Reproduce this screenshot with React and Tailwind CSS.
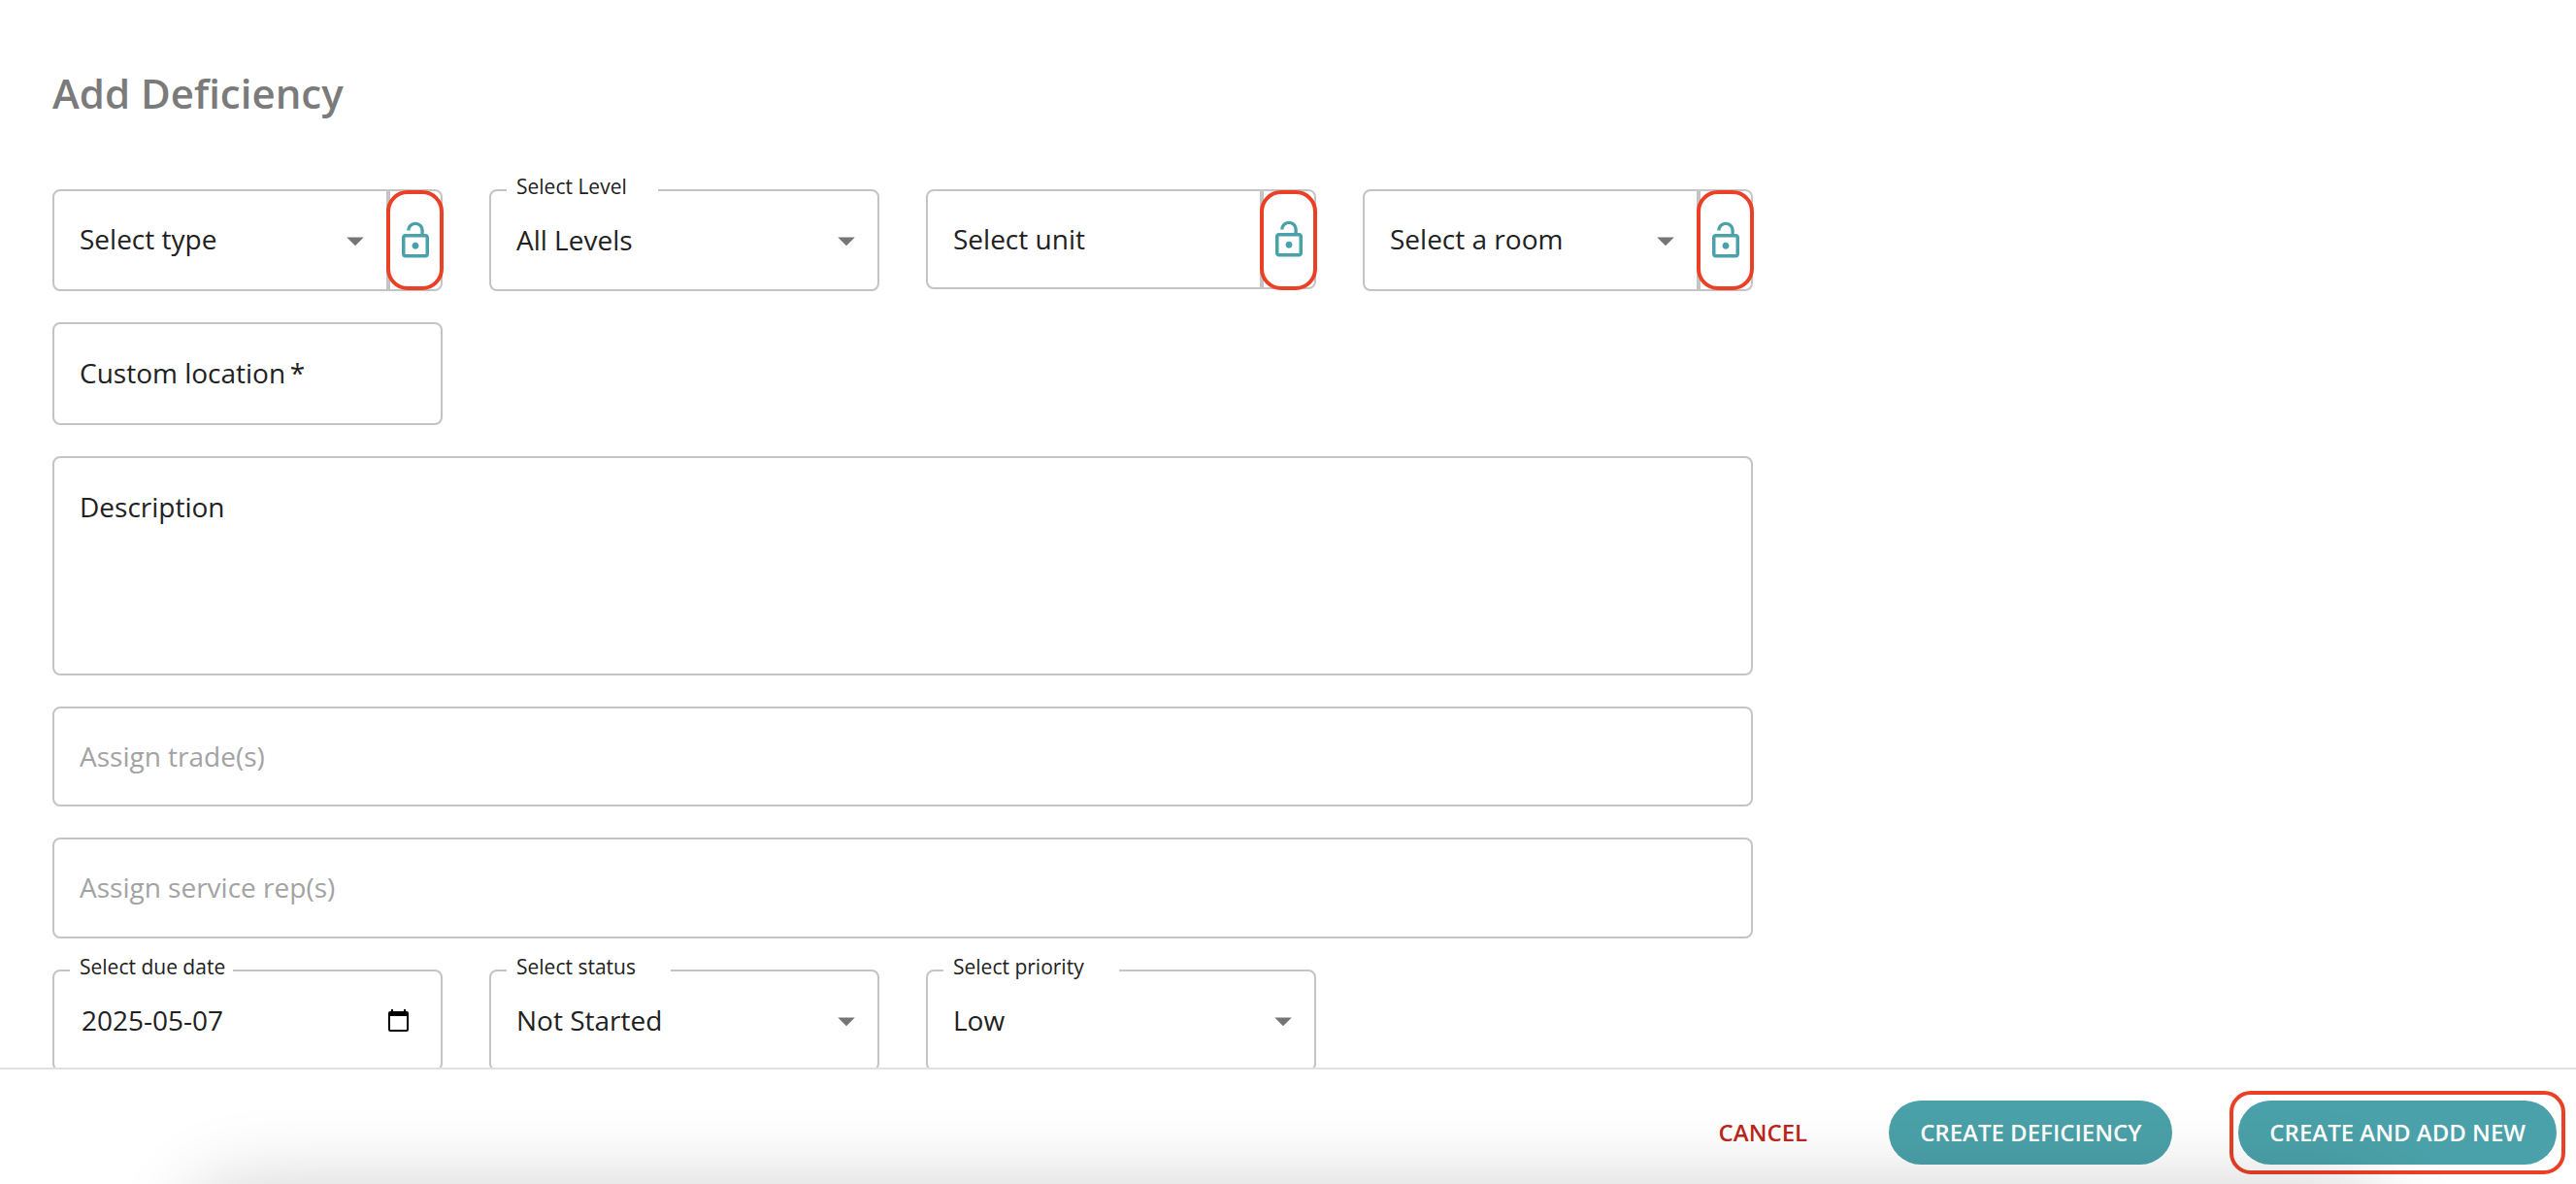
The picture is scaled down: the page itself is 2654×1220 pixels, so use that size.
import React from 'react';

const ArrowDropDown = () => (
  <svg
    viewBox="0 0 24 24"
    className="pointer-events-none absolute right-[11px] top-1/2 h-[42px] w-[42px] -translate-y-1/2 fill-[#757575]"
    aria-hidden="true"
  >
    <path d="M7 10l5 5 5-5z" />
  </svg>
);

const LockOpen = () => (
  <svg viewBox="0 0 24 24" className="h-[42px] w-[42px] shrink-0 fill-[#4ba1a9]" aria-hidden="true">
    <path d="M12 17c1.1 0 2-.9 2-2s-.9-2-2-2-2 .9-2 2 .9 2 2 2zm6-9h-1V6c0-2.76-2.24-5-5-5S7 3.24 7 6h1.9c0-1.71 1.39-3.1 3.1-3.1 1.71 0 3.1 1.39 3.1 3.1v2H6c-1.1 0-2 .9-2 2v10c0 1.1.9 2 2 2h12c1.1 0 2-.9 2-2V10c0-1.1-.9-2-2-2zm0 12H6V10h12v10z" />
  </svg>
);

const CalendarIcon = () => (
  <svg viewBox="0 0 21 23" className="h-[23px] w-[21px] fill-black" aria-hidden="true">
    <path d="M3 0h2v2h11V0h2v2h1a2 2 0 0 1 2 2v17a2 2 0 0 1-2 2H2a2 2 0 0 1-2-2V4a2 2 0 0 1 2-2h1zM2 7v14h17V7z" />
  </svg>
);

const LockButton = ({ name }) => (
  <button
    type="button"
    aria-label={`Lock ${name}`}
    className="relative flex w-14 shrink-0 items-center justify-center rounded-r-lg border-2 border-[#c4c4c4]"
  >
    <LockOpen />
    <span className="absolute -left-1 -right-[3px] -top-px h-[103px] rounded-[22px] border-4 border-[#eb4025]"></span>
  </button>
);

const LockableSelect = ({ text, name }) => (
  <div className="flex h-[105px]">
    <div className="relative min-w-0 flex-1 rounded-l-lg border-2 border-[#c4c4c4]">
      <select aria-label={text} className="h-full w-full appearance-none px-[26px] pb-1 outline-none">
        <option>{text}</option>
      </select>
      <ArrowDropDown />
    </div>
    <LockButton name={name} />
  </div>
);

const FloatingLabel = ({ id, children, className }) => (
  <label
    htmlFor={id}
    className={`absolute -top-[17px] left-4 bg-white pl-[10px] text-[21px] leading-6 ${className}`}
  >
    {children}
  </label>
);

const OutlinedSelect = ({ id, label, value, notch }) => (
  <div className="relative h-[105px] rounded-lg border-2 border-[#c4c4c4]">
    <FloatingLabel id={id} className={notch}>{label}</FloatingLabel>
    <select id={id} className="h-full w-full appearance-none px-[26px] pb-0.5 outline-none">
      <option>{value}</option>
    </select>
    <ArrowDropDown />
  </div>
);

const App = () => {
  return (
    <div className="flex h-screen flex-col bg-white font-['Open_Sans','Noto_Sans',sans-serif] text-[28px] text-[#212121]">
      <main className="min-h-0 flex-1 overflow-hidden">
        <form className="flex w-full max-w-[1860px] flex-col gap-8 px-[54px] pt-[68px]">
          <h1 className="mb-[39px] text-[42px] font-semibold leading-[56px] text-[#7b7b7b]">Add Deficiency</h1>

          <div className="grid grid-cols-4 items-start gap-x-12">
            <LockableSelect text="Select type" name="type" />
            <OutlinedSelect id="level" label="Select Level" value="All Levels" notch="pr-8" />
            <div className="flex h-[103px]">
              <input
                type="text"
                aria-label="Select unit"
                placeholder="Select unit"
                className="min-w-0 flex-1 rounded-l-lg border-2 border-[#c4c4c4] px-[26px] pb-0.5 outline-none placeholder:text-[#212121]"
              />
              <LockButton name="unit" />
            </div>
            <LockableSelect text="Select a room" name="room" />
          </div>

          <div className="grid grid-cols-4 gap-x-12">
            <input
              type="text"
              required
              aria-label="Custom location"
              placeholder={'Custom location\u2009*'}
              className="h-[106px] min-w-0 rounded-lg border-2 border-[#c4c4c4] px-[26px] pb-0.5 outline-none placeholder:text-[#212121]"
            />
          </div>

          <textarea
            aria-label="Description"
            placeholder="Description"
            className="h-[226px] resize-none rounded-lg border-2 border-[#c4c4c4] px-[26px] py-8 leading-9 outline-none placeholder:text-[#212121]"
          ></textarea>

          <input
            type="text"
            aria-label="Assign trade(s)"
            placeholder="Assign trade(s)"
            className="h-[103px] rounded-lg border-2 border-[#c4c4c4] px-[26px] pb-0.5 outline-none placeholder:text-[#a3a3a3]"
          />

          <input
            type="text"
            aria-label="Assign service rep(s)"
            placeholder="Assign service rep(s)"
            className="h-[104px] rounded-lg border-2 border-[#c4c4c4] px-[26px] pb-0.5 outline-none placeholder:text-[#a3a3a3]"
          />

          <div className="grid grid-cols-4 gap-x-12">
            <div className="relative flex h-[105px] items-center rounded-lg border-2 border-[#c4c4c4]">
              <FloatingLabel id="due" className="pr-2">Select due date</FloatingLabel>
              <input
                id="due"
                type="text"
                defaultValue="2025-05-07"
                className="h-full min-w-0 flex-1 pb-0.5 pl-7 outline-none"
              />
              <button type="button" aria-label="Open calendar" className="mr-[33px]">
                <CalendarIcon />
              </button>
            </div>
            <OutlinedSelect id="status" label="Select status" value="Not Started" notch="pr-9" />
            <OutlinedSelect id="priority" label="Select priority" value="Low" notch="pr-9" />
          </div>
        </form>
      </main>

      <footer className="relative flex h-[120px] shrink-0 items-center justify-end gap-[68px] overflow-hidden border-t-2 border-[#e0e0e0] pr-5 pt-3 text-[24px] font-semibold">
        <button type="button" className="px-4 text-[#bb271a]">CANCEL</button>
        <button type="button" className="h-[66px] rounded-full bg-[#4ba1a9] px-8 text-white">
          CREATE DEFICIENCY
        </button>
        <div className="relative">
          <button type="button" className="block h-[66px] rounded-full bg-[#4ba1a9] px-8 text-white">
            CREATE AND ADD NEW
          </button>
          <span className="pointer-events-none absolute -inset-x-[9px] -inset-y-[10px] rounded-[22px] border-4 border-[#eb4025]"></span>
        </div>
        {/* soft shadow rising from the bottom edge */}
        <div className="pointer-events-none absolute left-48 right-48 top-full h-40 rounded-[60px] shadow-[0_0_80px_rgba(0,0,0,0.18)]"></div>
      </footer>
    </div>
  );
};

export default App;
